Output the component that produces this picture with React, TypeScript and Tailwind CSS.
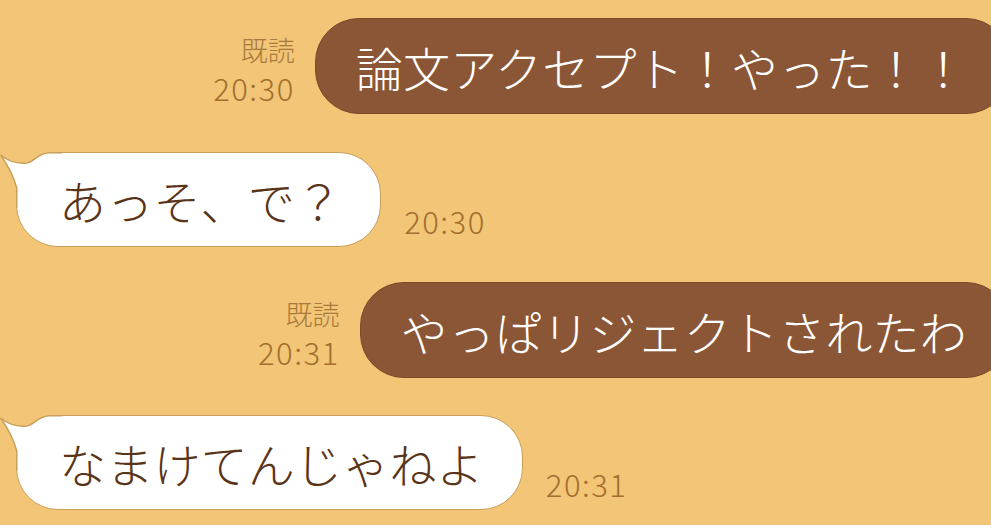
import React from "react";

const FONT = "font-['Noto_Sans_CJK_JP','Noto_Sans',sans-serif]";

function Sent({ text, time, className }: { text: string; time: string; className?: string }) {
  return (
    <div className={`flex justify-end items-end gap-[20px] ${className ?? ""}`}>
      <div className="flex flex-col items-end leading-none pb-[11px] text-[#a36e2f]">
        <span className="text-[27px] font-light text-[#a87a3d] mb-[9px]">既読</span>
        <span className="text-[31px] font-light tracking-[1.5px]">{time}</span>
      </div>
      <div className="h-[96px] pl-[40px] pr-[42px] rounded-[44px] bg-[#8b5636] border border-[#7a4a2c] flex items-center text-white text-[47px] font-light leading-none tracking-[0.2px] whitespace-nowrap">
        {text}
      </div>
    </div>
  );
}

function Received({ text, time, className }: { text: string; time: string; className?: string }) {
  return (
    <div className={`flex items-end gap-[23px] pl-[16px] ${className ?? ""}`}>
      <div className="relative h-[95px] pl-[42px] pr-[38px] rounded-[42px] bg-white border-[1.5px] border-[#c9a05a] flex items-center text-[#5a3418] text-[47px] font-light leading-none tracking-[0.2px] whitespace-nowrap">
        <svg
          className="absolute left-[-17.5px] top-[-1.5px]"
          width="80"
          height="60"
          viewBox="0 0 80 60"
        >
          <path
            d="M 16.75 56 L 16.75 36 C 14 26 7 12 0.5 3 C 8 9 18 12 27 11 C 34 10 38 0.75 50 0.75 L 62 0.75 L 62 56 Z"
            fill="#ffffff"
          />
          <path
            d="M 16.75 56 L 16.75 36 C 14 26 7 12 0.5 3 C 8 9 18 12 27 11 C 34 10 38 0.75 50 0.75 L 62 0.75"
            fill="none"
            stroke="#c9a05a"
            strokeWidth="1.5"
          />
        </svg>
        <span className="relative">{text}</span>
      </div>
      <span className="text-[31px] font-light tracking-[1.5px] leading-none pb-[11px] text-[#a36e2f]">{time}</span>
    </div>
  );
}

export default function App() {
  return (
    <div className={`w-[991px] h-[525px] overflow-hidden bg-[#f2c577] ${FONT}`}>
      <div className="w-[1010px] pt-[18px] flex flex-col">
        <Sent text="論文アクセプト！やった！！" time="20:30" />
        <Received className="mt-[38px]" text="あっそ、で？" time="20:30" />
        <Sent className="mt-[35px]" text="やっぱリジェクトされたわ" time="20:31" />
        <Received className="mt-[37px]" text="なまけてんじゃねよ" time="20:31" />
      </div>
    </div>
  );
}
